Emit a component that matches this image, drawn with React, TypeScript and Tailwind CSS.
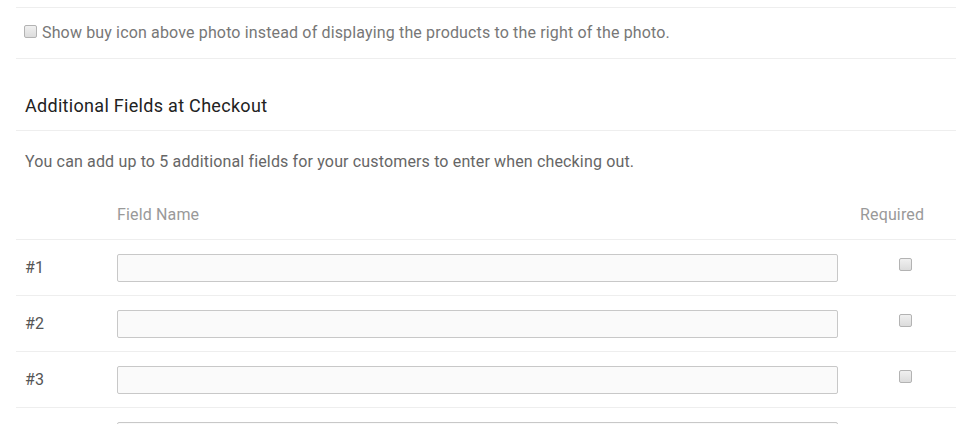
const ROWS = ['#1', '#2', '#3', '#4'];

function Box({ className = '' }: { className?: string }) {
  return (
    <span
      className={`inline-block h-[13px] w-[13px] shrink-0 rounded-[2px] border border-[#b3b3b3] bg-gradient-to-b from-[#f0f0f0] to-[#dcdcdc] ${className}`}
    />
  );
}

export default function App() {
  return (
    <div className="h-[424px] w-[956px] overflow-hidden bg-white font-['Roboto','Liberation_Sans',sans-serif] tracking-[0.15px]">
      <div className="pl-4">
        {/* previous section border */}
        <div className="h-[8px] border-b border-[#eeeeee]" />

        {/* option row */}
        <div className="flex h-[51px] items-center border-b border-[#eeeeee] pl-2">
          <label className="flex items-center text-[16px] text-[#777777]">
            <Box className="-mt-[3px] mr-[5px]" />
            Show buy icon above photo instead of displaying the products to the right of the photo.
          </label>
        </div>

        {/* section heading */}
        <div className="border-b border-[#eeeeee] pb-[12px] pl-[9px] pt-[35px]">
          <h2 className="text-[18px] leading-6 tracking-[0.3px] text-[#222222]">Additional Fields at Checkout</h2>
        </div>

        <p className="pl-[9px] pt-[21px] text-[16px] leading-5 text-[#666666]">
          You can add up to 5 additional fields for your customers to enter when checking out.
        </p>

        {/* table header */}
        <div className="flex border-b border-[#eeeeee] pb-[14px] pt-[33px] text-[16px] leading-5 text-[#999999]">
          <div className="w-[101px]" />
          <div className="w-[721px]">Field Name</div>
          <div className="pl-[22px]">Required</div>
        </div>

        {ROWS.map(r => (
          <div key={r} className="flex items-center border-b border-[#eeeeee] pb-[13px] pt-[14px]">
            <div className="-mt-[1px] w-[101px] pl-[9px] text-[16px] text-[#555555]">{r}</div>
            <input
              type="text"
              className="h-[28px] w-[721px] rounded-[2px] border border-[#c8c8c8] bg-[#fafafa] px-2 text-sm outline-none"
            />
            <div className="flex pl-[61px]">
              <Box className="-mt-[8px]" />
            </div>
          </div>
        ))}
      </div>
    </div>
  );
}
